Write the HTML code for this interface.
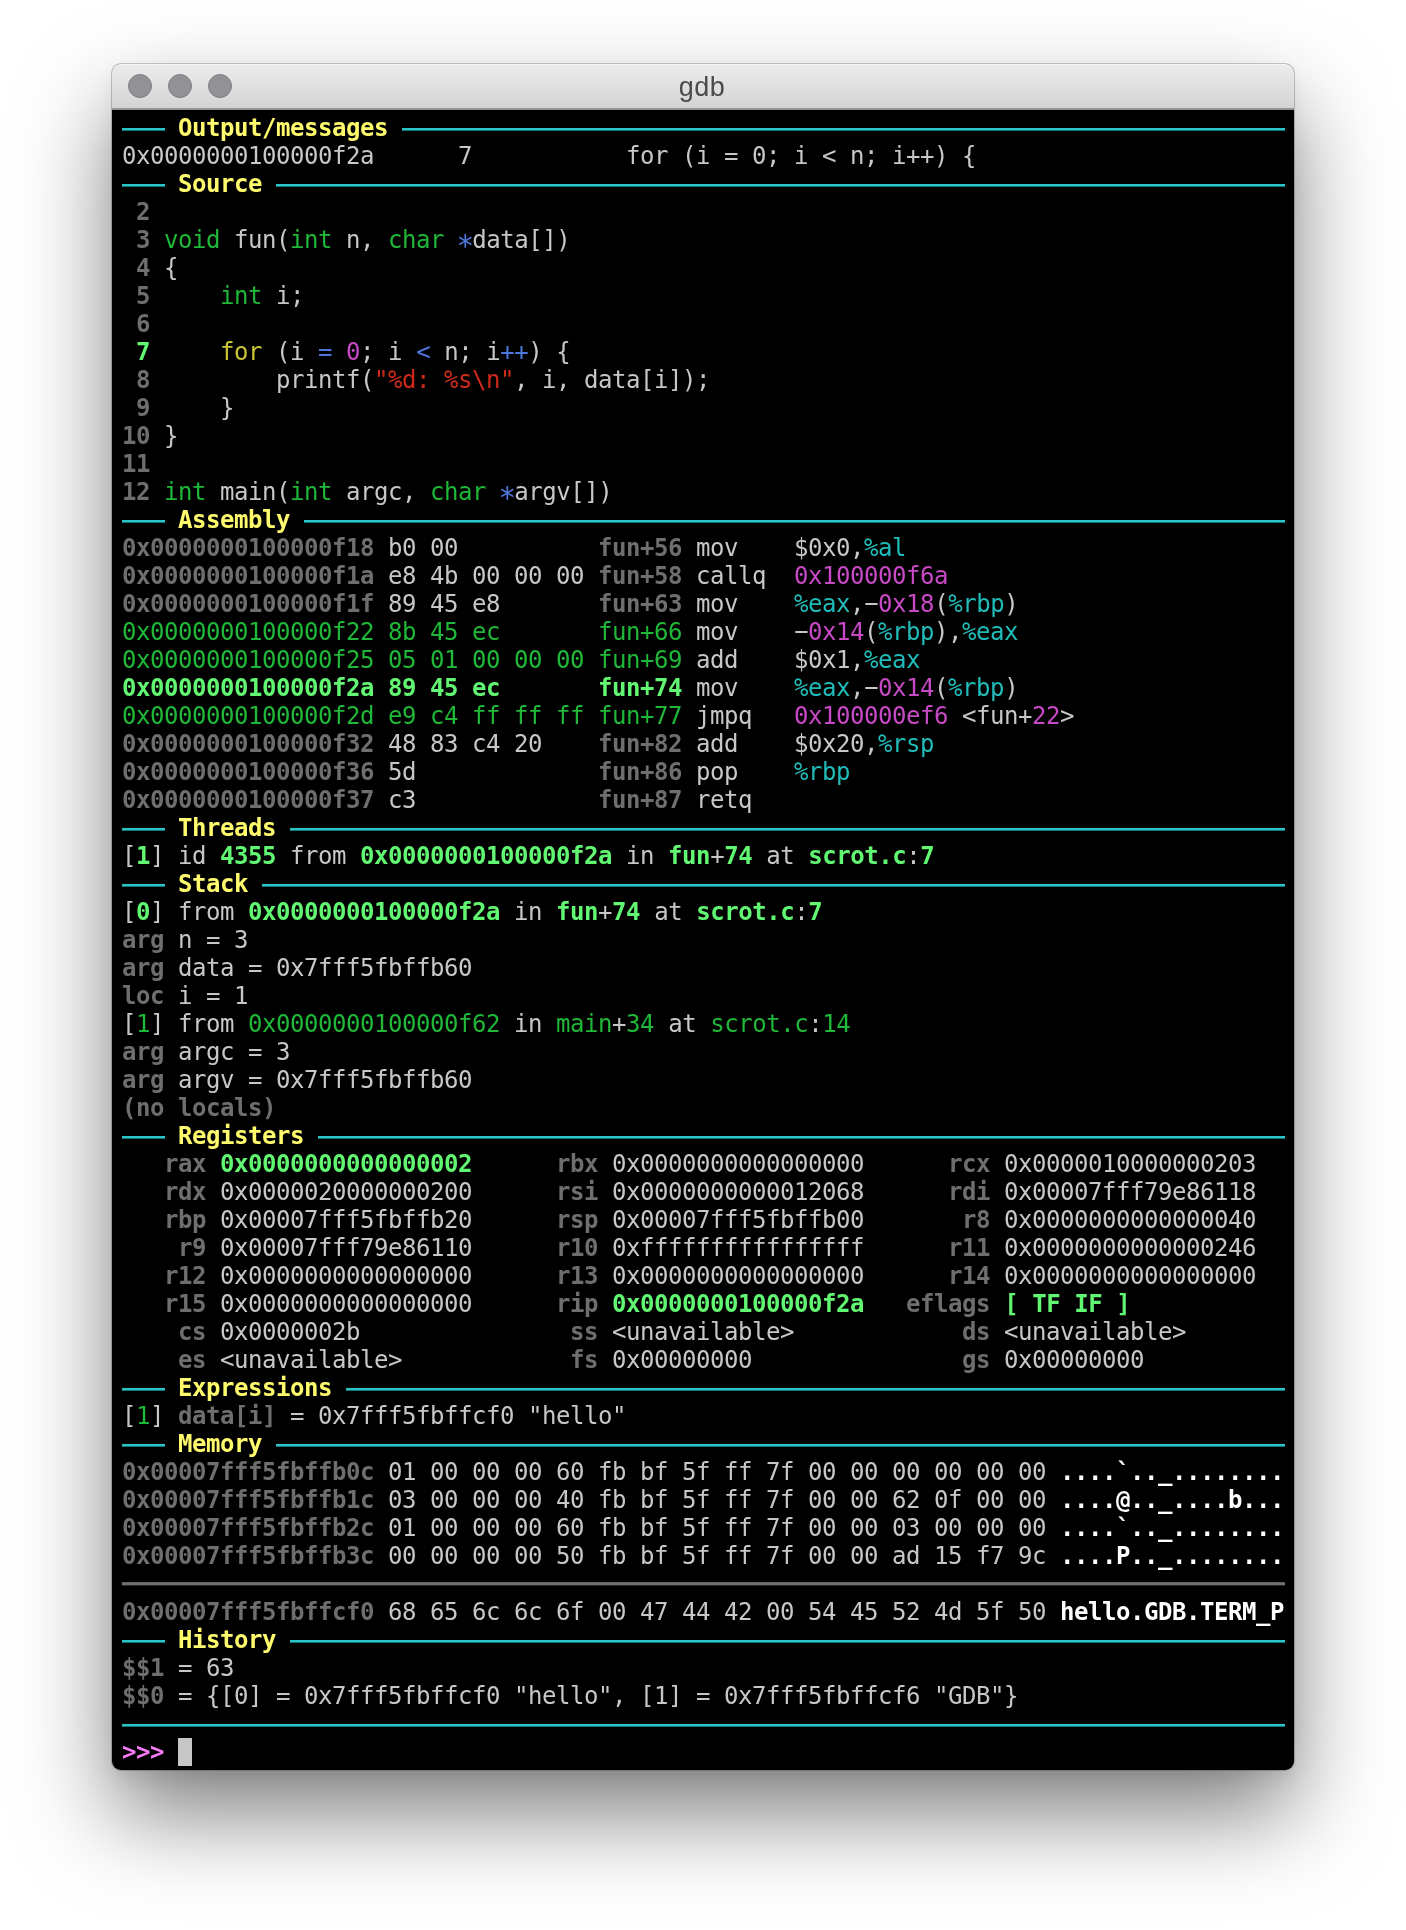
<!DOCTYPE html>
<html><head><meta charset="utf-8"><title>gdb</title>
<style>
html,body{margin:0;padding:0;}
body{width:1406px;height:1930px;background:#fff;position:relative;overflow:hidden;}
.win{position:absolute;left:112px;top:64px;width:1182px;height:1706px;border-radius:9px;background:#000;
 box-shadow:0 0 0 1px rgba(0,0,0,.2),0 44px 92px rgba(0,0,0,.5),0 8px 16px rgba(0,0,0,.06);}
.tb{position:absolute;left:0;top:0;width:100%;height:46px;border-radius:9px 9px 0 0;
 background:linear-gradient(#ececec 0,#d4d4d4 44px,#9a9a9a 44px,#8c8c8c 46px);box-shadow:inset 0 1px 0 #f8f8f8;}
.dot{position:absolute;top:10px;width:22px;height:22px;border-radius:50%;background:#929195;border:1px solid #7d7c80;}
.title{will-change:transform;position:absolute;left:-2px;right:0;top:0;height:46px;line-height:46px;text-align:center;font-family:"Liberation Sans",sans-serif;font-size:27px;letter-spacing:.5px;color:#4b4b4d;}
.term{will-change:transform;position:absolute;left:10px;top:50px;width:1162px;font-family:"DejaVu Sans Mono","Liberation Mono",monospace;font-size:24px;letter-spacing:-0.4492px;color:#c7c7c7;}
.r{position:relative;height:28px;line-height:28px;white-space:pre;}
.h .t{position:absolute;left:56px;top:0;color:#fffb6c;font-weight:bold;}
.l{position:absolute;top:14px;height:3px;background:linear-gradient(#2ac5c8 0 2px,#177679 2px 3px);}
.l.d{top:12px;background:linear-gradient(#626262 0 1px,#707070 1px 3px,#262626 3px 4px);height:4px;}
.g{color:#6e6e6e;font-weight:bold;}
.G{color:#1fb838;}
.B{color:#62f772;font-weight:bold;}
.y{color:#c9c533;}
.b{color:#4e77dd;}
.a{display:inline-block;transform:translateY(6px) scale(1.22);}
.hy{display:inline-block;transform:translateY(-1px) scaleX(2);}
.m{color:#c849c5;}
.e{color:#cf2a1c;}
.c{color:#20bcb9;}
.W{color:#fff;font-weight:bold;}
.P{color:#f679f6;font-weight:bold;}
.cur{display:inline-block;width:14px;height:28px;background:#c7c7c7;vertical-align:top;}

</style></head>
<body>
<div class="win">
<div class="tb"><i class="dot" style="left:15.5px"></i><i class="dot" style="left:55.5px"></i><i class="dot" style="left:95.5px"></i><span class="title">gdb</span></div>
<div class="term">
<div class="r h"><i class="l" style="left:-.5px;width:43.5px"></i><span class="t">Output/messages</span><i class="l" style="left:280px;right:-1px"></i></div>
<div class="r">0x0000000100000f2a      7           for (i = 0; i &lt; n; i++) {</div>
<div class="r h"><i class="l" style="left:-.5px;width:43.5px"></i><span class="t">Source</span><i class="l" style="left:154px;right:-1px"></i></div>
<div class="r"><span class="g"> 2</span></div>
<div class="r"><span class="g"> 3</span> <span class="G">void</span> fun(<span class="G">int</span> n, <span class="G">char</span> <span class="b a">*</span>data[])</div>
<div class="r"><span class="g"> 4</span> {</div>
<div class="r"><span class="g"> 5</span>     <span class="G">int</span> i;</div>
<div class="r"><span class="g"> 6</span></div>
<div class="r"><span class="B"> 7</span>     <span class="y">for</span> (i <span class="b">=</span> <span class="m">0</span>; i <span class="b">&lt;</span> n; i<span class="b">++</span>) {</div>
<div class="r"><span class="g"> 8</span>         printf(<span class="e">"%d: %s\n"</span>, i, data[i]);</div>
<div class="r"><span class="g"> 9</span>     }</div>
<div class="r"><span class="g">10</span> }</div>
<div class="r"><span class="g">11</span></div>
<div class="r"><span class="g">12</span> <span class="G">int</span> main(<span class="G">int</span> argc, <span class="G">char</span> <span class="b a">*</span>argv[])</div>
<div class="r h"><i class="l" style="left:-.5px;width:43.5px"></i><span class="t">Assembly</span><i class="l" style="left:182px;right:-1px"></i></div>
<div class="r"><span class="g">0x0000000100000f18</span> b0 00          <span class="g">fun+56</span> mov    $0x0,<span class="c">%al</span></div>
<div class="r"><span class="g">0x0000000100000f1a</span> e8 4b 00 00 00 <span class="g">fun+58</span> callq  <span class="m">0x100000f6a</span></div>
<div class="r"><span class="g">0x0000000100000f1f</span> 89 45 e8       <span class="g">fun+63</span> mov    <span class="c">%eax</span>,<span class="hy">-</span><span class="m">0x18</span>(<span class="c">%rbp</span>)</div>
<div class="r"><span class="G">0x0000000100000f22 8b 45 ec       fun+66</span> mov    <span class="hy">-</span><span class="m">0x14</span>(<span class="c">%rbp</span>),<span class="c">%eax</span></div>
<div class="r"><span class="G">0x0000000100000f25 05 01 00 00 00 fun+69</span> add    $0x1,<span class="c">%eax</span></div>
<div class="r"><span class="B">0x0000000100000f2a 89 45 ec       fun+74</span> mov    <span class="c">%eax</span>,<span class="hy">-</span><span class="m">0x14</span>(<span class="c">%rbp</span>)</div>
<div class="r"><span class="G">0x0000000100000f2d e9 c4 ff ff ff fun+77</span> jmpq   <span class="m">0x100000ef6</span> &lt;fun+<span class="m">22</span>&gt;</div>
<div class="r"><span class="g">0x0000000100000f32</span> 48 83 c4 20    <span class="g">fun+82</span> add    $0x20,<span class="c">%rsp</span></div>
<div class="r"><span class="g">0x0000000100000f36</span> 5d             <span class="g">fun+86</span> pop    <span class="c">%rbp</span></div>
<div class="r"><span class="g">0x0000000100000f37</span> c3             <span class="g">fun+87</span> retq   </div>
<div class="r h"><i class="l" style="left:-.5px;width:43.5px"></i><span class="t">Threads</span><i class="l" style="left:168px;right:-1px"></i></div>
<div class="r">[<span class="B">1</span>] id <span class="B">4355</span> from <span class="B">0x0000000100000f2a</span> in <span class="B">fun</span>+<span class="B">74</span> at <span class="B">scrot.c</span>:<span class="B">7</span></div>
<div class="r h"><i class="l" style="left:-.5px;width:43.5px"></i><span class="t">Stack</span><i class="l" style="left:140px;right:-1px"></i></div>
<div class="r">[<span class="B">0</span>] from <span class="B">0x0000000100000f2a</span> in <span class="B">fun</span>+<span class="B">74</span> at <span class="B">scrot.c</span>:<span class="B">7</span></div>
<div class="r"><span class="g">arg</span> n = 3</div>
<div class="r"><span class="g">arg</span> data = 0x7fff5fbffb60</div>
<div class="r"><span class="g">loc</span> i = 1</div>
<div class="r">[<span class="G">1</span>] from <span class="G">0x0000000100000f62</span> in <span class="G">main</span>+<span class="G">34</span> at <span class="G">scrot.c</span>:<span class="G">14</span></div>
<div class="r"><span class="g">arg</span> argc = 3</div>
<div class="r"><span class="g">arg</span> argv = 0x7fff5fbffb60</div>
<div class="r"><span class="g">(no locals)</span></div>
<div class="r h"><i class="l" style="left:-.5px;width:43.5px"></i><span class="t">Registers</span><i class="l" style="left:196px;right:-1px"></i></div>
<div class="r"><span class="g">   rax</span> <span class="B">0x0000000000000002</span>   <span class="g">   rbx</span> 0x0000000000000000   <span class="g">   rcx</span> 0x0000010000000203</div>
<div class="r"><span class="g">   rdx</span> 0x0000020000000200   <span class="g">   rsi</span> 0x0000000000012068   <span class="g">   rdi</span> 0x00007fff79e86118</div>
<div class="r"><span class="g">   rbp</span> 0x00007fff5fbffb20   <span class="g">   rsp</span> 0x00007fff5fbffb00   <span class="g">    r8</span> 0x0000000000000040</div>
<div class="r"><span class="g">    r9</span> 0x00007fff79e86110   <span class="g">   r10</span> 0xffffffffffffffff   <span class="g">   r11</span> 0x0000000000000246</div>
<div class="r"><span class="g">   r12</span> 0x0000000000000000   <span class="g">   r13</span> 0x0000000000000000   <span class="g">   r14</span> 0x0000000000000000</div>
<div class="r"><span class="g">   r15</span> 0x0000000000000000   <span class="g">   rip</span> <span class="B">0x0000000100000f2a</span>   <span class="g">eflags</span> <span class="B">[ TF IF ]</span></div>
<div class="r"><span class="g">    cs</span> 0x0000002b           <span class="g">    ss</span> &lt;unavailable&gt;        <span class="g">    ds</span> &lt;unavailable&gt;</div>
<div class="r"><span class="g">    es</span> &lt;unavailable&gt;        <span class="g">    fs</span> 0x00000000           <span class="g">    gs</span> 0x00000000</div>
<div class="r h"><i class="l" style="left:-.5px;width:43.5px"></i><span class="t">Expressions</span><i class="l" style="left:224px;right:-1px"></i></div>
<div class="r">[<span class="G">1</span>] <span class="g">data[i]</span> = 0x7fff5fbffcf0 "hello"</div>
<div class="r h"><i class="l" style="left:-.5px;width:43.5px"></i><span class="t">Memory</span><i class="l" style="left:154px;right:-1px"></i></div>
<div class="r"><span class="g">0x00007fff5fbffb0c</span> 01 00 00 00 60 fb bf 5f ff 7f 00 00 00 00 00 00 <span class="W">....`.._........</span></div>
<div class="r"><span class="g">0x00007fff5fbffb1c</span> 03 00 00 00 40 fb bf 5f ff 7f 00 00 62 0f 00 00 <span class="W">....@.._....b...</span></div>
<div class="r"><span class="g">0x00007fff5fbffb2c</span> 01 00 00 00 60 fb bf 5f ff 7f 00 00 03 00 00 00 <span class="W">....`.._........</span></div>
<div class="r"><span class="g">0x00007fff5fbffb3c</span> 00 00 00 00 50 fb bf 5f ff 7f 00 00 ad 15 f7 9c <span class="W">....P.._........</span></div>
<div class="r h"><i class="l d" style="left:0;right:-1px"></i></div>
<div class="r"><span class="g">0x00007fff5fbffcf0</span> 68 65 6c 6c 6f 00 47 44 42 00 54 45 52 4d 5f 50 <span class="W">hello.GDB.TERM_P</span></div>
<div class="r h"><i class="l" style="left:-.5px;width:43.5px"></i><span class="t">History</span><i class="l" style="left:168px;right:-1px"></i></div>
<div class="r"><span class="g">$$1</span> = 63</div>
<div class="r"><span class="g">$$0</span> = {[0] = 0x7fff5fbffcf0 "hello", [1] = 0x7fff5fbffcf6 "GDB"}</div>
<div class="r h"><i class="l" style="left:-.5px;right:-1px"></i></div>
<div class="r"><span class="P">&gt;&gt;&gt;</span> <i class="cur"></i></div>
</div>
</div>
</body></html>
